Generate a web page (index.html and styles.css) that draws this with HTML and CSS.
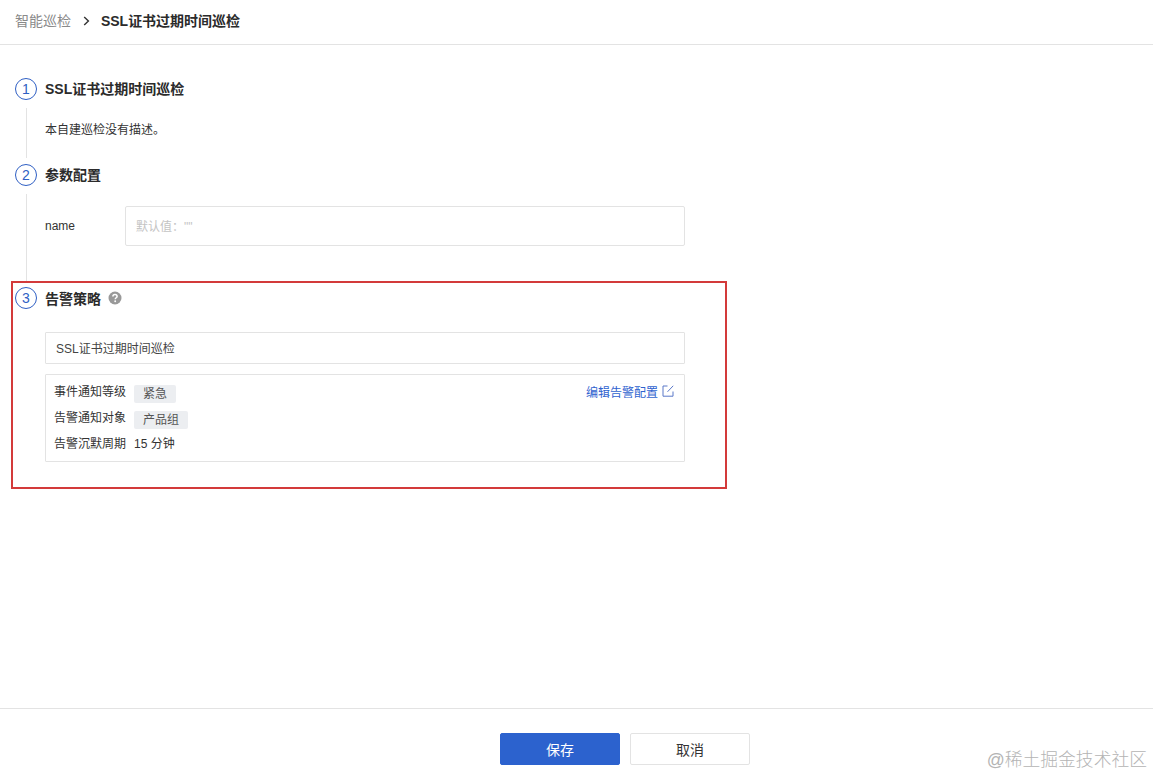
FILE: index.html
```html
<!DOCTYPE html>
<html lang="zh-CN">
<head>
<meta charset="utf-8">
<title>SSL证书过期时间巡检</title>
<link rel="stylesheet" href="styles.css">
</head>
<body>
<div class="page">
  <header class="crumbs">
    <span class="crumb-parent">智能巡检</span>
    <svg class="crumb-sep" width="7" height="10" viewBox="0 0 7 10"><path d="M1.2 1 L5.4 5 L1.2 9" fill="none" stroke="#333" stroke-width="1.4"/></svg>
    <span class="crumb-current">SSL证书过期时间巡检</span>
  </header>
  <main class="main">
    <section class="step">
      <div class="step-head"><span class="step-num">1</span><h2 class="step-title">SSL证书过期时间巡检</h2></div>
      <div class="step-body step-body-desc"><p class="desc">本自建巡检没有描述。</p></div>
    </section>
    <section class="step">
      <div class="step-head"><span class="step-num">2</span><h2 class="step-title">参数配置</h2></div>
      <div class="step-body step-body-form">
        <div class="field">
          <label class="field-label">name</label>
          <div class="field-input">默认值：""</div>
        </div>
      </div>
    </section>
    <section class="step step-last">
      <div class="step-head">
        <span class="step-num">3</span><h2 class="step-title step-title-flush">告警策略</h2>
        <svg class="help" width="14" height="14" viewBox="0 0 14 14"><circle cx="7" cy="7" r="6.5" fill="#999"/><path d="M4.9 5.4 C4.9 4.2 5.9 3.6 7 3.6 C8.2 3.6 9.1 4.3 9.1 5.4 C9.1 6.7 7.2 6.8 7.2 8.2" fill="none" stroke="#fff" stroke-width="1.5"/><circle cx="7.2" cy="10.2" r="0.95" fill="#fff"/></svg>
      </div>
      <div class="policy">
        <div class="policy-name">SSL证书过期时间巡检</div>
        <div class="policy-card">
          <div class="policy-rows">
            <div class="row"><span class="row-label">事件通知等级</span><span class="tag">紧急</span></div>
            <div class="row"><span class="row-label">告警通知对象</span><span class="tag">产品组</span></div>
            <div class="row"><span class="row-label">告警沉默周期</span><span class="row-value">15 分钟</span></div>
          </div>
          <a class="edit-link" href="#">编辑告警配置
            <svg width="12" height="12" viewBox="0 0 12 12"><path d="M5.5 1 H1 V11.2 H11 V6.5 M5.5 6.8 L11.2 0.8" fill="none" stroke="#5a78c8" stroke-width="1"/></svg>
          </a>
        </div>
      </div>
    </section>
    <div class="highlight"></div>
  </main>
  <footer class="footer">
    <button class="btn btn-primary">保存</button>
    <button class="btn btn-default">取消</button>
  </footer>
  <div class="watermark">@稀土掘金技术社区</div>
</div>
</body>
</html>
```
FILE: styles.css
```css
* { box-sizing: border-box; }
html, body { margin: 0; padding: 0; background: #fff; }
body {
  font-family: "Liberation Sans", "Noto Sans CJK SC", sans-serif;
  font-size: 12px;
  color: #333;
}
.page {
  position: relative;
  display: flex;
  flex-direction: column;
  width: 1153px;
  height: 776px;
  overflow: hidden;
}
.crumbs {
  display: flex;
  align-items: center;
  height: 45px;
  padding: 0 0 5px 15px;
  border-bottom: 1px solid #e3e3e3;
  font-size: 14px;
}
.crumb-parent { color: #8a8a8a; }
.crumb-sep { margin: 2px 11px 0 12px; }
.crumb-current { font-weight: 700; color: #2b2b2b; letter-spacing: -0.03px; }
.main {
  position: relative;
  flex: 1;
  padding: 33px 0 0 15px;
}
.step-head { display: flex; align-items: center; height: 22px; }
.step-num {
  display: flex;
  align-items: center;
  justify-content: center;
  width: 22px;
  height: 22px;
  margin-right: 8px;
  border: 1px solid #2f5fc4;
  border-radius: 50%;
  color: #2f5fc4;
  font-size: 14px;
}
.step-title {
  margin: 0 0 2px;
  font-size: 14px;
  font-weight: 700;
  color: #2b2b2b;
}
.step-title-flush { margin-bottom: 0; }
.step-body {
  margin: 8px 0 6px 11px;
  padding-left: 18px;
  border-left: 1px solid #e3e3e3;
}
.step-body-desc { height: 50px; padding-top: 12px; }
.step-body-form { height: 87px; padding-top: 12px; }
.desc { margin: 1px 0 0; line-height: 18px; color: #333; }
.field { display: flex; align-items: center; }
.field-label { width: 80px; color: #333; }
.field-input {
  display: flex;
  align-items: center;
  width: 560px;
  height: 40px;
  padding: 0 10px 2px;
  border: 1px solid #e3e3e3;
  border-radius: 2px;
  color: #c4c4c4;
}
.help { margin-left: 7px; }
.policy { margin: 23px 0 0 30px; width: 640px; }
.policy-name {
  display: flex;
  align-items: center;
  height: 32px;
  padding: 0 0 2px 10px;
  border: 1px solid #e3e3e3;
  border-radius: 1px;
  color: #444;
}
.policy-card {
  display: flex;
  justify-content: space-between;
  height: 88px;
  margin-top: 10px;
  padding: 8px 10px 0 8px;
  border: 1px solid #e3e3e3;
  border-radius: 1px;
}
.policy-rows { display: flex; flex-direction: column; }
.row { display: flex; align-items: flex-start; height: 27px; }
.row-label { width: 80px; margin-top: 1px; line-height: 16px; color: #333; }
.row-value { line-height: 18px; color: #333; }
.tag {
  height: 18px;
  margin-top: 2px;
  padding: 0 9px;
  border-radius: 2px;
  background: #eceef1;
  line-height: 18px;
  color: #555;
}
.edit-link {
  display: flex;
  align-items: center;
  gap: 4px;
  height: 16px;
  color: #2f63cf;
  text-decoration: none;
}
.highlight {
  position: absolute;
  left: 11px;
  top: 236px;
  width: 716px;
  height: 208px;
  border: 2px solid #d33a3a;
  pointer-events: none;
}
.footer {
  display: flex;
  justify-content: center;
  gap: 10px;
  height: 68px;
  padding: 24px 0 0 97px;
  border-top: 1px solid #e3e3e3;
}
.btn {
  width: 120px;
  height: 32px;
  border-radius: 2px;
  font-family: inherit;
  font-size: 14px;
}
.btn-primary { border: 1px solid #2c62ce; background: #2c62ce; color: #fff; }
.btn-default { border: 1px solid #e3e3e3; background: #fff; color: #333; }
.watermark {
  position: absolute;
  right: 6px;
  bottom: 3px;
  font-size: 17.8px;
  line-height: 26px;
  color: #b4b4b4;
  font-weight: 300;
}
```
